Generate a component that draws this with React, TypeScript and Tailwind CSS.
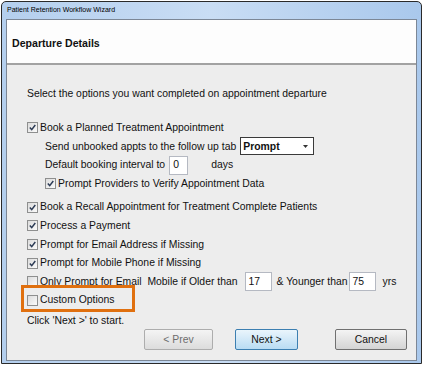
import React from "react";

function Check({ on }: { on?: boolean }) {
  return (
    <span className="mr-[2px] flex h-[11px] w-[11px] shrink-0 items-center justify-center border border-[#8e8f8f] bg-gradient-to-br from-[#dcdcdc] to-[#fbfbfb]">
      {on && (
        <svg width="9" height="9" viewBox="0 0 9 9">
          <path d="M1.8 4.6 L3.7 6.6 L7.3 2" fill="none" stroke="#2c3b55" strokeWidth="1.5" />
        </svg>
      )}
    </span>
  );
}

function Row({ className = "", children }: { className?: string; children: React.ReactNode }) {
  return <div className={`flex h-[18.6px] items-center ${className}`}>{children}</div>;
}

function Field({ value, className = "" }: { value: string; className?: string }) {
  return (
    <span className={`flex h-[19px] shrink-0 items-center border border-[#b5b9c2] bg-white px-[3px] ${className}`}>{value}</span>
  );
}

export default function App() {
  return (
    <div className="h-[366px] w-[424px] bg-white p-[1px] text-[10.4px] text-[#111] [font-family:'Liberation_Sans',Arial,sans-serif]">
      <div className="flex h-[363px] w-[421px] flex-col rounded-t-[5px] border border-[#2a2a2a] bg-gradient-to-r from-[#b4cfee] via-[#c9ddf4] to-[#a9c8ec] px-[4px] pb-[2px]">
        <div className="flex h-[17px] items-center pl-[1px] text-[7px] text-black">Patient Retention Workflow Wizard</div>
        <div className="flex flex-1 flex-col border border-[#7c8796] bg-[#ededed]">
          <div className="flex h-[45px] items-center border-b-[2px] border-[#a2a2a2] bg-[#fdfdfd] pl-[5px] pt-[5px] text-[10.6px] font-bold">
            Departure Details
          </div>
          <div className="flex flex-col pl-[20px] pt-[20px]">
            <Row>Select the options you want completed on appointment departure</Row>
            <Row className="mt-[15px]">
              <Check on />
              Book a Planned Treatment Appointment
            </Row>
            <div className="flex flex-col pl-[18px]">
              <Row>
                Send unbooked appts to the follow up tab
                <span className="ml-[4px] flex h-[18px] w-[74px] items-center justify-between border border-[#3a3a3a] bg-white pl-[2px] pr-[5px] font-bold">
                  Prompt
                  <svg width="5" height="3" viewBox="0 0 5 3">
                    <path d="M0 0 H5 L2.5 3 Z" fill="#333" />
                  </svg>
                </span>
              </Row>
              <Row>
                Default booking interval to
                <Field value="0" className="ml-[4px] w-[19px]" />
                <span className="ml-[23px]">days</span>
              </Row>
              <Row>
                <Check on />
                Prompt Providers to Verify Appointment Data
              </Row>
            </div>
            <Row className="mt-[5px]">
              <Check on />
              Book a Recall Appointment for Treatment Complete Patients
            </Row>
            <Row>
              <Check on />
              Process a Payment
            </Row>
            <Row>
              <Check on />
              Prompt for Email Address if Missing
            </Row>
            <Row>
              <Check on />
              Prompt for Mobile Phone if Missing
            </Row>
            <Row>
              <Check />
              Only Prompt for Email&nbsp;&nbsp;Mobile if Older than
              <Field value="17" className="ml-[7px] w-[27px]" />
              <span className="ml-[5px]">&amp; Younger than</span>
              <Field value="75" className="ml-[1px] w-[27px]" />
              <span className="ml-[7px]">yrs</span>
            </Row>
            <div className="relative">
              <Row>
                <Check />
                Custom Options
              </Row>
              <div className="pointer-events-none absolute left-[-6px] top-[-6px] h-[27px] w-[114px] border-[3px] border-[#e0700f]" />
            </div>
            <Row className="mt-[2px] h-[16px]">Click 'Next &gt;' to start.</Row>
          </div>
          <div className="mt-[-1px] flex items-center pl-[137px]">
            <button className="h-[21px] w-[69px] rounded-[2px] border border-[#adadad] bg-gradient-to-b from-[#f4f4f4] to-[#dcdcdc] text-[#6d6d6d]">
              &lt; Prev
            </button>
            <button className="ml-[22px] h-[21px] w-[63px] rounded-[2px] border border-[#3c7fb1] bg-gradient-to-b from-[#eaf5fc] to-[#b9dcf3] text-[#111]">
              Next &gt;
            </button>
            <button className="ml-[37px] h-[21px] w-[72px] rounded-[2px] border border-[#707070] bg-gradient-to-b from-[#f4f4f4] to-[#d4d4d4] text-[#111]">
              Cancel
            </button>
          </div>
        </div>
      </div>
    </div>
  );
}
